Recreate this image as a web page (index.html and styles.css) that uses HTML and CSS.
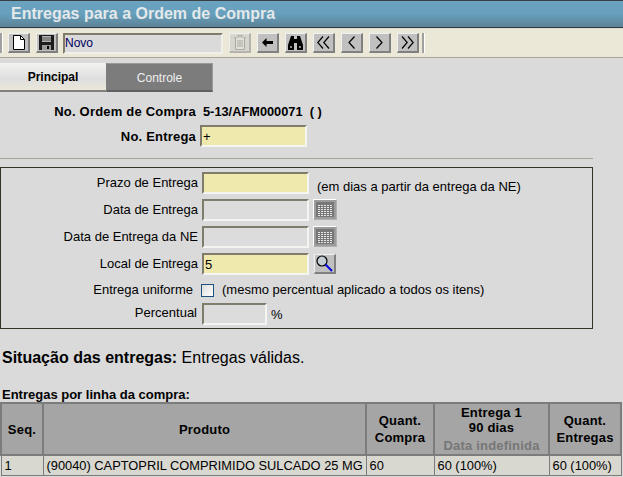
FILE: index.html
```html
<!DOCTYPE html>
<html lang="pt">
<head>
    <meta charset="UTF-8">
    <title>Entregas para a Ordem de Compra</title>
    <link rel="stylesheet" href="styles.css">
</head>
<body>

    <div class="title-bar">Entregas para a Ordem de Compra</div>

    <div class="toolbar">
        <span class="grip"></span>
        <button class="tool">
            <svg width="12" height="15" viewBox="0 0 12 15"><path d="M.5 .5H7.5L11.5 4.5V14.5H.5Z" fill="#fff" stroke="#000"/><path d="M7.5 .5V4.5H11.5" fill="none" stroke="#000"/></svg>
        </button>
        <button class="tool">
            <svg width="15" height="15" viewBox="0 0 15 15"><path d="M0 0H15V15H0Z" fill="#1c1c1c"/><path d="M3 1H12V7H3Z" fill="#b4b4b4"/><path d="M3 3H12M3 5H12" stroke="#555"/><path d="M3 10H12V15H3Z" fill="#9a9a9a"/><path d="M8 11H10V14H8Z" fill="#000"/></svg>
        </button>
        <input class="status-input" type="text" value="Novo">
        <button class="tool tool-off">
            <svg width="12" height="15" viewBox="0 0 12 15"><path d="M0 2.5H12M4 2.5V.5H8V2.5" fill="none" stroke="#aaa9a0"/><path d="M1.5 2.5V14.5H10.5V2.5" fill="#e0e0d8" stroke="#aaa9a0"/><path d="M4 5V12M6 5V12M8 5V12" fill="none" stroke="#aaa9a0"/></svg>
        </button>
        <button class="tool">
            <svg width="11" height="9" viewBox="0 0 11 9"><path d="M0 4.5L4.5 0V3H11V6H4.5V9Z" fill="#000"/></svg>
        </button>
        <button class="tool">
            <svg width="15" height="14" viewBox="0 0 15 14"><path d="M3 0H6V3H9V0H12L15 9V14H9V7H6V14H0V9Z" fill="#000"/><path d="M2 10H4V12H2ZM11 10H13V12H11Z" fill="#8a8a8a"/></svg>
        </button>
        <button class="tool">
            <svg width="13" height="13" viewBox="0 0 13 13"><path d="M6 .5L.8 6.5L6 12.5M12 .5L6.8 6.5L12 12.5" fill="none" stroke="#000" stroke-width="1.2"/></svg>
        </button>
        <button class="tool">
            <svg width="7" height="13" viewBox="0 0 7 13"><path d="M6.5 .5L1 6.5L6.5 12.5" fill="none" stroke="#000" stroke-width="1.2"/></svg>
        </button>
        <button class="tool">
            <svg width="7" height="13" viewBox="0 0 7 13"><path d="M.5 .5L6 6.5L.5 12.5" fill="none" stroke="#000" stroke-width="1.2"/></svg>
        </button>
        <button class="tool">
            <svg width="13" height="13" viewBox="0 0 13 13"><path d="M1 .5L6.2 6.5L1 12.5M7 .5L12.2 6.5L7 12.5" fill="none" stroke="#000" stroke-width="1.2"/></svg>
        </button>
        <span class="grip grip-end"></span>
    </div>

    <div class="tabs">
        <div class="tab tab-on">Principal</div>
        <div class="tab tab-off">Controle</div>
    </div>

    <div class="head-form">
        <div class="head-label head-first">No. Ordem de Compra</div>
        <div class="head-value head-first">5-13/AFM000071&nbsp; ( )</div>
        <div class="head-label">No. Entrega</div>
        <input class="field field-req" type="text" value="+">
    </div>

    <div class="rule"></div>

    <div class="box">
        <label>Prazo de Entrega</label>
        <div class="line">
            <input class="field field-req" type="text">
            <span class="note note-low">(em dias a partir da entrega da NE)</span>
        </div>
        <label>Data de Entrega</label>
        <div class="line">
            <input class="field" type="text">
            <button class="pick pick-cal"><span class="cal"></span></button>
        </div>
        <label>Data de Entrega da NE</label>
        <div class="line">
            <input class="field" type="text">
            <button class="pick pick-cal"><span class="cal"></span></button>
        </div>
        <label>Local de Entrega</label>
        <div class="line">
            <input class="field field-req" type="text" value="5">
            <button class="pick">
                <svg width="18" height="17" viewBox="0 0 18 17"><circle cx="6" cy="6" r="5" fill="#c4ccd4" stroke="#000" stroke-width="1.2"/><path d="M9.5 9.5L16 16" stroke="#0000e0" stroke-width="2"/></svg>
            </button>
        </div>
        <label class="label-check">Entrega uniforme</label>
        <div class="line line-check">
            <span class="check"></span>
            <span class="note">(mesmo percentual aplicado a todos os itens)</span>
        </div>
        <label class="label-pct">Percentual</label>
        <div class="line">
            <input class="field field-small" type="text">
            <span class="note note-pct">%</span>
        </div>
    </div>

    <p class="situacao"><b>Situação das entregas:</b> Entregas válidas.</p>

    <p class="table-title">Entregas por linha da compra:</p>
    <table class="grid">
        <tr>
            <th class="col-seq">Seq.</th>
            <th class="col-prod">Produto</th>
            <th class="col-qt">Quant.<br>Compra</th>
            <th class="col-ent">Entrega 1<br>90 dias<span class="muted">Data indefinida</span></th>
            <th class="col-tot">Quant.<br>Entregas</th>
        </tr>
        <tr>
            <td>1</td>
            <td>(90040) CAPTOPRIL COMPRIMIDO SULCADO 25 MG</td>
            <td>60</td>
            <td>60 (100%)</td>
            <td>60 (100%)</td>
        </tr>
    </table>

</body>
</html>
```
FILE: styles.css
```css
body {
    font-family: "Liberation Sans", Arial, sans-serif;
    font-size: 13px;
    margin: 0;
    background-color: #dadada;
    color: #000;
    overflow: hidden;
}
.title-bar {
    height: 26px;
    line-height: 26px;
    padding-left: 11px;
    font-size: 16px;
    font-weight: bold;
    color: #e4e8ea;
    background: linear-gradient(#6aa3c0, #66a0bc 50%, #5c8296);
    border-top: 1px solid #3a3f44;
    border-bottom: 1px solid #30383c;
}
.toolbar {
    display: flex;
    align-items: center;
    gap: 6px;
    height: 28px;
    margin-top: 1px;
    background-color: #ebe8d8;
    border-bottom: 1px solid #a8a498;
}
.grip {
    width: 1px;
    height: 20px;
    border-left: 1px solid #a0a0a0;
    border-right: 1px solid #fff;
    background-color: #a0a0a0;
    margin-right: -1px;
}
.grip-end {
    margin-left: -3px;
}
.tool {
    width: 22px;
    height: 20px;
    padding: 0;
    display: flex;
    align-items: center;
    justify-content: center;
    background-color: #c0c0c0;
    border: 1px solid;
    border-color: #f0f0f0 #808080 #808080 #f0f0f0;
    border-bottom-width: 2px;
    border-right-width: 2px;
}
.tool-off {
    background-color: #d6d6ce;
    border-color: #eee #b4b4ac #b4b4ac #eee;
}
.status-input {
    width: 160px;
    height: 21px;
    box-sizing: border-box;
    padding: 0;
    font-family: inherit;
    font-size: 12px;
    color: #000060;
    background-color: #dadada;
    border: 2px solid;
    border-color: #807c6c #f0f0e8 #f0f0e8 #807c6c;
    margin: 0 0 0 -1px;
}
.tabs {
    display: flex;
    margin-top: 5px;
}
.tab {
    width: 107px;
    height: 29px;
    box-sizing: border-box;
    line-height: 28px;
    font-size: 12px;
    text-align: center;
}
.tab-on {
    font-weight: bold;
    background: linear-gradient(#f2f2f0, #dedede 60%, #ebe8d8);
    border-bottom: 2px solid #808080;
    border-right: 1px solid #808080;
}
.tab-off {
    width: 106px;
    color: #f0f0f0;
    background-color: #7c7c7c;
    border-bottom: 2px solid #606060;
    border-top: 1px solid #999;
    border-right: 1px solid #999;
}
.head-form {
    display: grid;
    grid-template-columns: 196px auto;
    column-gap: 4px;
    align-items: center;
    justify-content: start;
    margin-top: 10px;
    font-weight: bold;
}
.head-label {
    text-align: right;
    letter-spacing: 0.2px;
}
.head-first {
    height: 23px;
    line-height: 20px;
}
.head-value {
    margin-left: 3px;
    font-size: 12.8px;
}
.field {
    width: 107px;
    height: 22px;
    box-sizing: border-box;
    margin: 0;
    padding: 0 1px;
    font-family: inherit;
    font-size: 13px;
    background-color: #dcdcdc;
    border: 2px solid;
    border-color: #807c6c #f4f4f0 #f4f4f0 #807c6c;
}
.field-req {
    background-color: #f0e9ae;
}
.field-small {
    width: 65px;
}
.rule {
    height: 1px;
    width: 593px;
    margin-top: 11px;
    background-color: #a8a498;
}
.box {
    width: 593px;
    height: 162px;
    box-sizing: border-box;
    margin-top: 8px;
    padding-top: 4px;
    border: 1px solid #33332a;
    display: grid;
    grid-template-columns: 197px auto;
    grid-template-rows: 27px 27px 27px 27px 23px 27px;
    column-gap: 4px;
    justify-content: start;
}
.box label {
    text-align: right;
    line-height: 22px;
}
.box .label-check {
    padding-right: 5px;
    line-height: 20px;
}
.box .label-pct {
    padding-right: 1px;
    line-height: 20px;
}
.line {
    display: flex;
    align-items: flex-start;
}
.line-check {
    align-items: center;
    height: 20px;
    margin-left: -1px;
}
.note {
    margin-left: 8px;
    line-height: 20px;
}
.note-low {
    margin-top: 5px;
}
.note-pct {
    margin: 2px 0 0 4px;
}
.pick {
    width: 22px;
    height: 20px;
    margin: 1px 0 0 5px;
    padding: 0;
    display: flex;
    align-items: center;
    justify-content: center;
    background-color: #c0c0c0;
    border: 1px solid;
    border-color: #f0f0f0 #808080 #808080 #f0f0f0;
    border-bottom-width: 2px;
    border-right-width: 2px;
}
.pick-cal {
    width: 24px;
    height: 21px;
    margin: 0 0 0 4px;
    background-color: #9c9c9c;
    border: 1px solid;
    border-color: #fff #b0b0b0 #b0b0b0 #fff;
}
.cal {
    display: block;
    width: 18px;
    height: 15px;
    box-sizing: border-box;
    background-color: #e8e8e8;
    background-image:
        linear-gradient(#777 1px, transparent 1px),
        linear-gradient(90deg, #777 1px, transparent 1px);
    background-size: 3px 2px;
    border: 1px solid #777;
    border-top-width: 2px;
}
.check {
    width: 11px;
    height: 11px;
    background: linear-gradient(135deg, #dcdcd8, #fff);
    border: 1px solid #1c5180;
}
.situacao {
    margin: 20px 0 0 2px;
    font-size: 16px;
    line-height: 18px;
}
.table-title {
    margin: 20px 0 0 2px;
    font-weight: bold;
    line-height: 15px;
}
.grid {
    width: 622px;
    border-collapse: collapse;
    table-layout: fixed;
}
.grid th {
    height: 50px;
    padding: 0;
    font-size: 13px;
    line-height: 15px;
    letter-spacing: 0.2px;
    text-align: center;
    vertical-align: middle;
    background-color: #a5a5a5;
    border: 2px solid #7c7c7c;
}
.grid td {
    height: 19px;
    padding: 0 3px;
    font-size: 12.85px;
    background-color: #d8d8d0;
    border: 1px solid #7c7c7c;
    white-space: nowrap;
    overflow: hidden;
}
.grid .col-qt,
.grid .col-tot {
    line-height: 17px;
}
.grid .col-seq {
    width: 40px;
}
.grid .col-prod {
    width: 321px;
}
.col-qt {
    width: 66px;
}
.col-ent {
    width: 113px;
}
.muted {
    display: block;
    margin-top: 3px;
    color: #777;
}
```
